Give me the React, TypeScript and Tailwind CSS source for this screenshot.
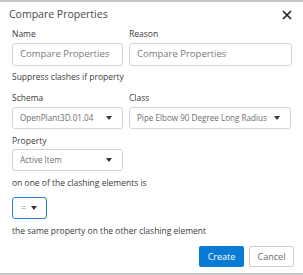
import React from 'react';

const font = { fontFamily: '"Open Sans", "Noto Sans", sans-serif' };

const Caret = () => (
  <svg width="6" height="4" viewBox="0 0 6 4" className="shrink-0">
    <path d="M0 0 L6 0 L3 4 Z" fill="#333" />
  </svg>
);

const Select = ({ value, className = '' }: { value: string; className?: string }) => (
  <div
    className={`h-[22px] flex items-center justify-between pl-[7px] pr-[10px] border border-[#d4d4d4] rounded-[3px] bg-white text-[8.1px] text-[#6e6e6e] ${className}`}
  >
    <span className="whitespace-nowrap">{value}</span>
    <Caret />
  </div>
);

const Input = ({ value }: { value: string }) => (
  <div className="h-[23px] flex items-center px-[7px] border border-[#d4d4d4] rounded-[3px] bg-white text-[9.5px] text-[#7a7a7a] whitespace-nowrap">
    {value}
  </div>
);

const Text = ({ children, className = '' }: { children: React.ReactNode; className?: string }) => (
  <div className={`text-[8.5px] text-[#3c3c3c] leading-[12px] whitespace-nowrap ${className}`}>{children}</div>
);

export default function App() {
  return (
    <div style={font} className="w-[303px] h-[275px] bg-white border-t-2 border-b-2 border-[#c8c8c8] overflow-hidden">
      <div className="flex items-center justify-between pl-[9px] pr-[11px] h-[26px]">
        <span className="text-[10.5px] text-[#4a4a4a]">Compare Properties</span>
        <svg width="10" height="10" viewBox="0 0 10 10">
          <path d="M1 1 L9 9 M9 1 L1 9" stroke="#222" strokeWidth="1.7" />
        </svg>
      </div>
      <div className="pl-[12px] pr-[11px]">
        <div className="grid grid-cols-[111px_163px] gap-x-[6px]">
          <div>
            <Text className="mb-[3px]">Name</Text>
            <Input value="Compare Properties" />
          </div>
          <div>
            <Text className="mb-[3px]">Reason</Text>
            <Input value="Compare Properties" />
          </div>
        </div>
        <Text className="mt-[5px]">Suppress clashes if property</Text>
        <div className="grid grid-cols-[111px_162px] gap-x-[6px] mt-[9px]">
          <div>
            <Text className="mb-[3px]">Schema</Text>
            <Select value="OpenPlant3D.01.04" />
          </div>
          <div>
            <Text className="mb-[3px]">Class</Text>
            <Select value="Pipe Elbow 90 Degree Long Radius" />
          </div>
        </div>
        <Text className="mt-[6px] mb-[2px]">Property</Text>
        <Select value="Active Item" className="w-[111px]" />
        <Text className="mt-[6px]">on one of the clashing elements is</Text>
        <div className="mt-[8px] w-[35px] h-[22px] flex items-center justify-between pl-[8px] pr-[9px] border border-[#2b7fd0] rounded-[3px] text-[9px] text-[#888]">
          <span>=</span>
          <Caret />
        </div>
        <Text className="mt-[6px]">the same property on the other clashing element</Text>
        <div className="flex justify-end gap-[5px] mt-[9px] -mr-[2px]">
          <button className="w-[45px] h-[21px] bg-[#0a7ad4] text-white text-[9px] rounded-[2px]">Create</button>
          <button className="w-[45px] h-[21px] bg-white border border-[#cfcfcf] text-[#6b6b6b] text-[9px] rounded-[2px]">Cancel</button>
        </div>
      </div>
    </div>
  );
}
